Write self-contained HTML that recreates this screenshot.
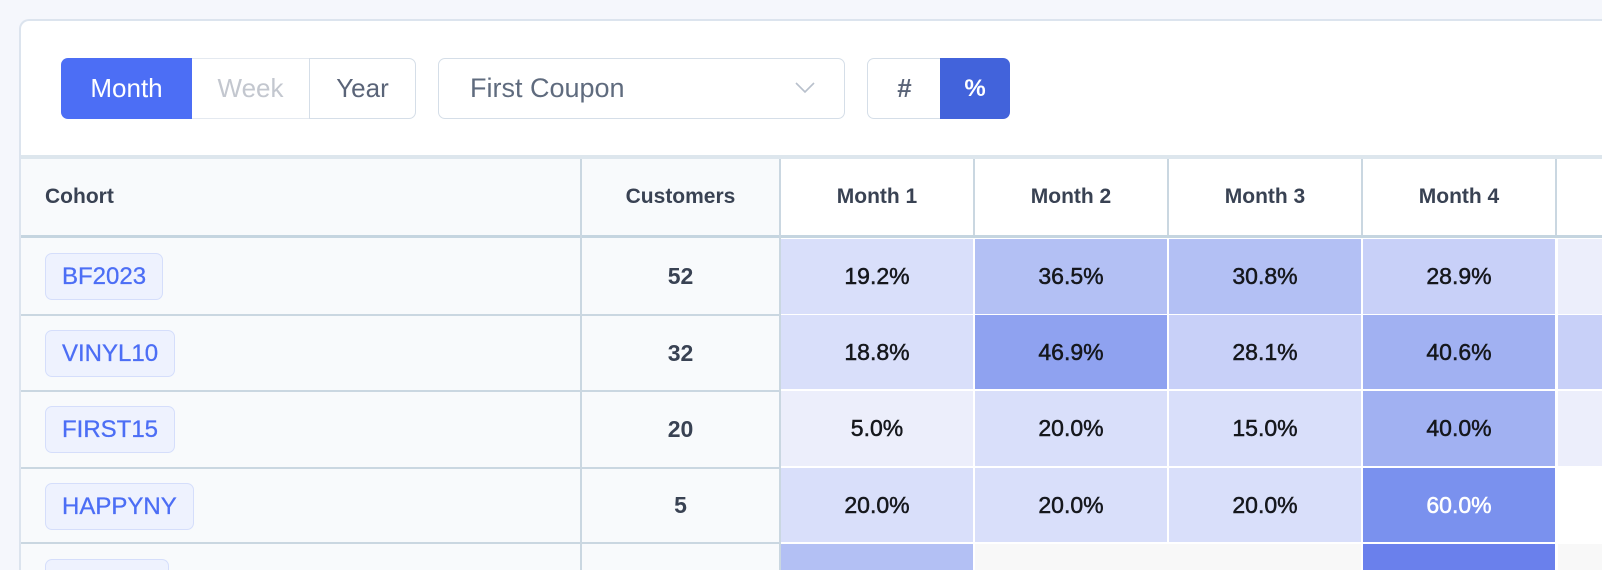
<!DOCTYPE html>
<html><head><meta charset="utf-8"><style>
*{box-sizing:border-box;margin:0;padding:0}
html,body{width:1602px;height:570px;overflow:hidden;background:#F5F7FC;font-family:"Liberation Sans",sans-serif}
#w{position:relative;width:1602px;height:570px;overflow:hidden}
.card{position:absolute;left:19px;top:19px;width:1583px;height:551px;background:#fff;border:2px solid #DCE4EE;border-bottom:none;border-right:none;border-radius:10px 0 0 0}
.a{position:absolute}
.seg{position:absolute;top:58px;height:61px;display:flex;align-items:center;justify-content:center;font-size:26px}
.hd{position:absolute;top:159px;height:76px;display:flex;align-items:center;font-size:21px;font-weight:bold;color:#394253}
.c{position:absolute;display:flex;align-items:center;justify-content:center;font-size:23px;color:#15171c;-webkit-text-stroke:0.5px #15171c}
.badge{position:absolute;left:45px;height:47px;border:1.5px solid #D5DEFB;background:#EEF2FE;border-radius:7px;color:#4C6EF5;font-size:24px;display:flex;align-items:center;padding:0 16px;-webkit-text-stroke:0.3px #4C6EF5}
.num{position:absolute;left:582px;width:197px;display:flex;align-items:center;justify-content:center;font-size:23px;font-weight:bold;color:#394253}
</style></head><body><div id="w">
<div class="card"></div>
<div class="seg" style="left:61px;width:131px;background:#4C6EF5;color:#fff;border-radius:7px 0 0 7px">Month</div>
<div class="seg" style="left:192px;width:118px;border:1.5px solid #E4E9F0;border-left:none;color:#C3C7CF">Week</div>
<div class="seg" style="left:309px;width:107px;border:1.5px solid #D5DEE8;border-radius:0 7px 7px 0;color:#5A6478">Year</div>
<div class="seg" style="left:438px;width:407px;border:1.5px solid #D5DEE8;border-radius:7px;justify-content:flex-start;padding-left:31px;color:#5F6B7E;font-size:27px">First Coupon
<svg class="a" style="left:355px;top:22px" width="22" height="14" viewBox="0 0 22 14"><path d="M2 2 L11 11 L20 2" fill="none" stroke="#B8C0CC" stroke-width="1.6"/></svg></div>
<div class="seg" style="left:867px;width:74px;border:1.5px solid #D5DEE8;border-right:none;border-radius:7px 0 0 7px;color:#5A6478;font-weight:bold">#</div>
<div class="seg" style="left:940px;width:70px;background:#4263DB;color:#fff;border-radius:0 7px 7px 0;font-weight:bold;font-size:24px">%</div>
<div class="a" style="left:21px;top:155px;width:1581px;height:4px;background:#DDE6ED"></div>
<div class="a" style="left:21px;top:159px;width:758px;height:411px;background:#F8FAFC"></div>
<div class="a" style="left:21px;top:235px;width:1581px;height:3px;background:#C5D5E0"></div>
<div class="a" style="left:580px;top:159px;width:2px;height:411px;background:#CAD7E1"></div>
<div class="a" style="left:779px;top:159px;width:2px;height:411px;background:#CAD7E1"></div>
<div class="a" style="left:973px;top:159px;width:2px;height:76px;background:#CAD7E1"></div>
<div class="a" style="left:1167px;top:159px;width:2px;height:76px;background:#CAD7E1"></div>
<div class="a" style="left:1361px;top:159px;width:2px;height:76px;background:#CAD7E1"></div>
<div class="a" style="left:1555px;top:159px;width:2px;height:76px;background:#CAD7E1"></div>
<div class="a" style="left:21px;top:314px;width:760px;height:2px;background:#CAD7E1"></div>
<div class="a" style="left:21px;top:390px;width:760px;height:2px;background:#CAD7E1"></div>
<div class="a" style="left:21px;top:467px;width:760px;height:2px;background:#CAD7E1"></div>
<div class="a" style="left:21px;top:542px;width:760px;height:2px;background:#CAD7E1"></div>
<div class="hd" style="left:45px">Cohort</div>
<div class="hd" style="left:582px;width:197px;justify-content:center">Customers</div>
<div class="hd" style="left:781px;width:192px;justify-content:center">Month 1</div>
<div class="hd" style="left:975px;width:192px;justify-content:center">Month 2</div>
<div class="hd" style="left:1169px;width:192px;justify-content:center">Month 3</div>
<div class="hd" style="left:1363px;width:192px;justify-content:center">Month 4</div>
<div class="badge" style="top:253px">BF2023</div>
<div class="badge" style="top:330px">VINYL10</div>
<div class="badge" style="top:406px">FIRST15</div>
<div class="badge" style="top:483px">HAPPYNY</div>
<div class="badge" style="top:559px;height:11px;width:124px;border-bottom:none;border-radius:7px 7px 0 0"></div>
<div class="num" style="top:238px;height:76px">52</div>
<div class="num" style="top:316px;height:74px">32</div>
<div class="num" style="top:392px;height:75px">20</div>
<div class="num" style="top:469px;height:73px">5</div>
<div class="c" style="left:781px;top:239px;width:192px;height:75px;background:#D9DFFA">19.2%</div>
<div class="c" style="left:975px;top:239px;width:192px;height:75px;background:#B3C0F4">36.5%</div>
<div class="c" style="left:1169px;top:239px;width:192px;height:75px;background:#B3C0F4">30.8%</div>
<div class="c" style="left:1363px;top:239px;width:192px;height:75px;background:#C8D0F8">28.9%</div>
<div class="c" style="left:1558px;top:239px;width:44px;height:75px;background:#ECEEFB"></div>
<div class="c" style="left:781px;top:315px;width:192px;height:74px;background:#D9DFFA">18.8%</div>
<div class="c" style="left:975px;top:315px;width:192px;height:74px;background:#8FA2F0">46.9%</div>
<div class="c" style="left:1169px;top:315px;width:192px;height:74px;background:#C8D0F8">28.1%</div>
<div class="c" style="left:1363px;top:315px;width:192px;height:74px;background:#A1B1F2">40.6%</div>
<div class="c" style="left:1558px;top:315px;width:44px;height:74px;background:#C8D0F8"></div>
<div class="c" style="left:781px;top:391px;width:192px;height:75px;background:#ECEEFB">5.0%</div>
<div class="c" style="left:975px;top:391px;width:192px;height:75px;background:#D9DFFA">20.0%</div>
<div class="c" style="left:1169px;top:391px;width:192px;height:75px;background:#D9DFFA">15.0%</div>
<div class="c" style="left:1363px;top:391px;width:192px;height:75px;background:#A1B1F2">40.0%</div>
<div class="c" style="left:1558px;top:391px;width:44px;height:75px;background:#ECEEFB"></div>
<div class="c" style="left:781px;top:468px;width:192px;height:74px;background:#D9DFFA">20.0%</div>
<div class="c" style="left:975px;top:468px;width:192px;height:74px;background:#D9DFFA">20.0%</div>
<div class="c" style="left:1169px;top:468px;width:192px;height:74px;background:#D9DFFA">20.0%</div>
<div class="c" style="left:1363px;top:468px;width:192px;height:74px;background:#7A91EE;color:#fff;-webkit-text-stroke:0.5px #fff">60.0%</div>
<div class="c" style="left:781px;top:544px;width:192px;height:26px;background:#B3C0F4"></div>
<div class="c" style="left:975px;top:544px;width:386px;height:26px;background:#F8F8F8"></div>
<div class="c" style="left:1363px;top:544px;width:192px;height:26px;background:#6A80EC"></div>
<div class="c" style="left:1558px;top:544px;width:44px;height:26px;background:#F8F8F8"></div>
</div></body></html>
